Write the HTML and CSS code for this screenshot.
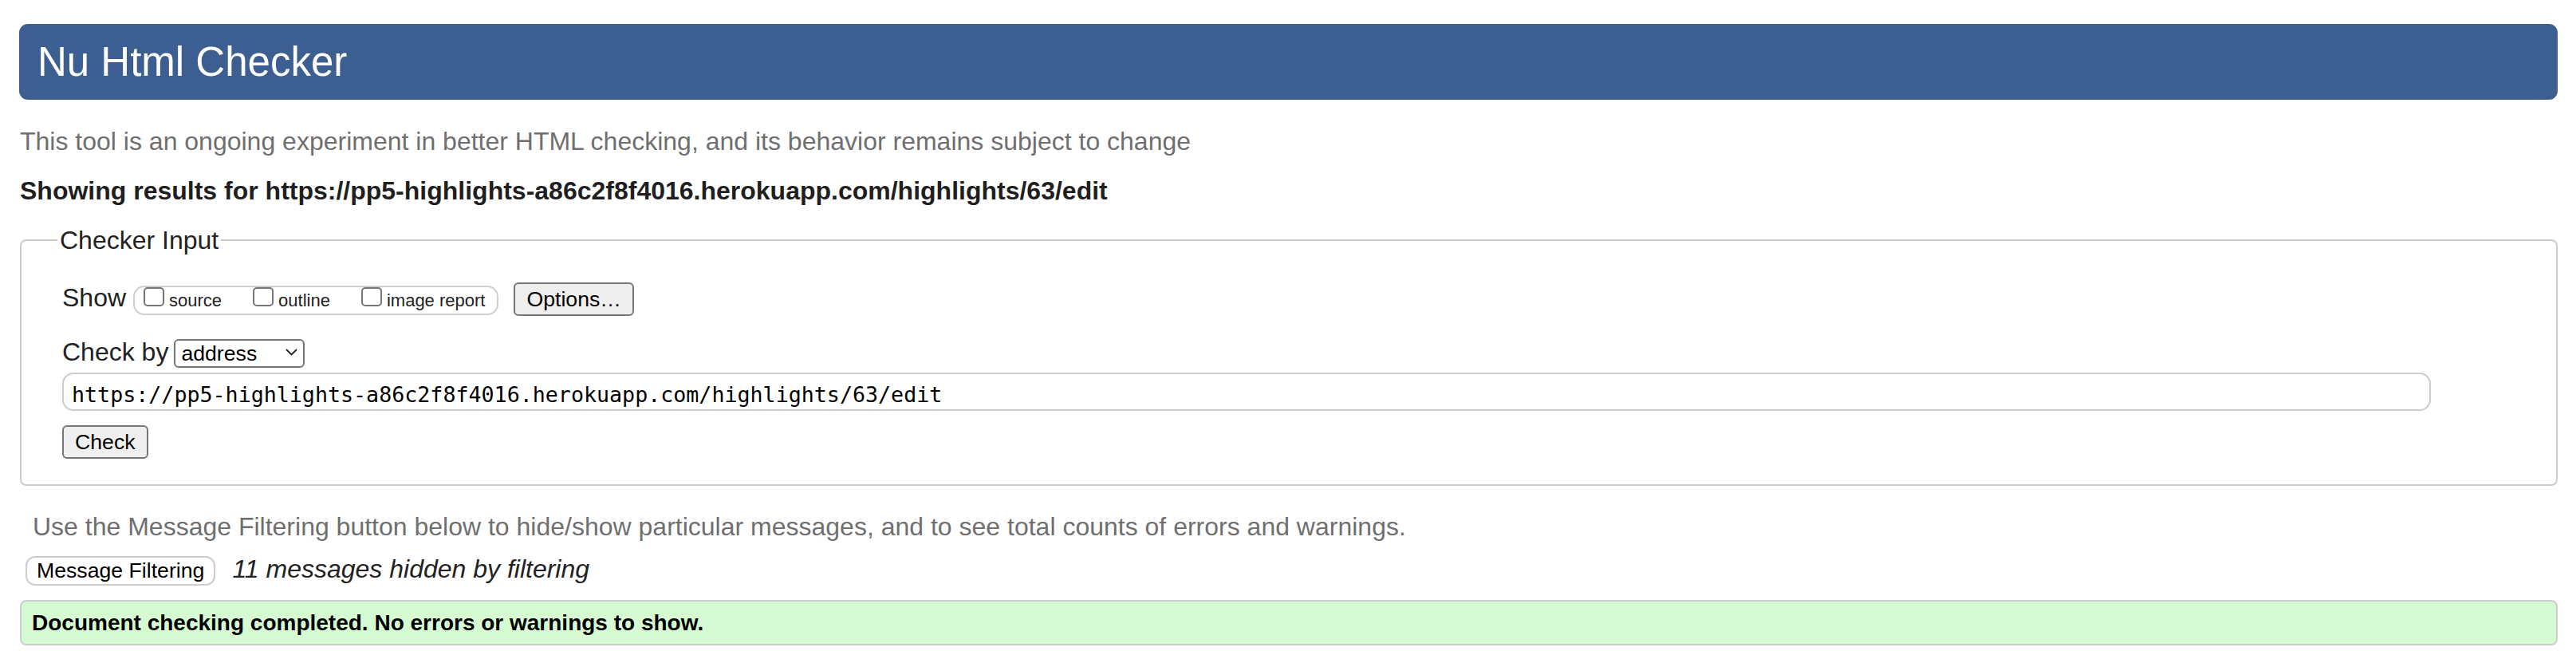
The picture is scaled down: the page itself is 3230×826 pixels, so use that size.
FILE: index.html
```html
<!DOCTYPE html>
<html lang="en">
<head>
<meta charset="utf-8">
<title>Nu Html Checker</title>
<link rel="stylesheet" href="styles.css">
</head>
<body>
<div class="page">
  <h1 class="title">Nu Html Checker</h1>
  <p class="intro">This tool is an ongoing experiment in better HTML checking, and its behavior remains subject to change</p>
  <p class="results-for">Showing results for https://pp5-highlights-a86c2f8f4016.herokuapp.com/highlights/63/edit</p>
  <form class="checker">
    <fieldset class="checker-fieldset">
      <legend class="legend">Checker Input</legend>
      <div class="row row-show">
        <span class="row-label">Show</span>
        <span class="show-group">
          <label class="opt"><input type="checkbox" class="cb">source</label>
          <label class="opt"><input type="checkbox" class="cb">outline</label>
          <label class="opt opt-last"><input type="checkbox" class="cb">image report</label>
        </span>
        <button class="btn btn-options" type="button">Options…</button>
      </div>
      <div class="row row-by">
        <span class="row-label">Check by</span>
        <span class="select-wrap">
          <select class="select"><option>address</option></select>
          <svg class="chev" width="15" height="9" viewBox="0 0 15 9"><path d="M1 1 L7.5 7.5 L14 1" fill="none" stroke="#222" stroke-width="1.8"/></svg>
        </span>
      </div>
      <div class="row-url"><input class="url" type="url" value="https://pp5-highlights-a86c2f8f4016.herokuapp.com/highlights/63/edit"></div>
      <div class="row-submit"><button class="btn" type="button">Check</button></div>
    </fieldset>
  </form>
  <p class="filter-note">Use the Message Filtering button below to hide/show particular messages, and to see total counts of errors and warnings.</p>
  <div class="filter-row">
    <button class="btn-filter" type="button">Message Filtering</button>
    <span class="hidden-count">11 messages hidden by filtering</span>
  </div>
  <div class="success">Document checking completed. No errors or warnings to show.</div>
</div>
</body>
</html>
```

FILE: styles.css
```css
html, body {
  margin: 0;
  padding: 0;
  background: #fff;
}

body {
  font-family: "Liberation Sans", Arial, Helvetica, sans-serif;
  font-size: 32px;
  color: #222;
}

.page {
  padding: 30px 23px 0 25px;
}

.title {
  margin: 0 0 0 -1px;
  height: 95px;
  line-height: 95px;
  padding-left: 23px;
  font-size: 51px;
  font-weight: normal;
  color: #fff;
  background: #3d5e91;
  border-radius: 11px;
}

.intro {
  margin: 32px 0 0;
  line-height: 40px;
  color: #6f6f6f;
}

.results-for {
  margin: 22px 0 0;
  line-height: 40px;
  font-weight: bold;
  color: #1f1f22;
}

.checker {
  margin: 22px 0 0;
}

.checker-fieldset {
  margin: 0;
  min-width: 0;
  border: 2px solid #cccccc;
  border-radius: 8px;
  padding: 32px 0 32px 51px;
}

.legend {
  margin-left: -6px;
  padding: 0 3px;
  line-height: 40px;
  font-size: 32px;
  color: #222;
}

.row {
  display: flex;
  align-items: baseline;
}

.row-label {
  line-height: 40px;
  color: #222;
}

.show-group {
  display: flex;
  align-items: baseline;
  margin-left: 9px;
  border: 2px solid #cfcfcf;
  border-radius: 14px;
  padding: 0 15px 0 3px;
  font-size: 22px;
  line-height: 33px;
  color: #222;
}

.opt {
  display: block;
  margin-right: 31px;
  white-space: nowrap;
}

.opt-last {
  margin-right: 0;
}

.cb {
  appearance: none;
  -webkit-appearance: none;
  box-sizing: border-box;
  width: 26px;
  height: 24px;
  margin: 0 6px 0 8px;
  border: 2px solid #767676;
  border-radius: 5px;
  background: #fff;
  vertical-align: baseline;
}

.btn {
  font-family: "Liberation Sans", Arial, Helvetica, sans-serif;
  font-size: 26.67px;
  line-height: 30px;
  padding: 4px 14px;
  border: 2px solid #767676;
  border-radius: 6px;
  background: #efefef;
  color: #000;
}

.btn-options {
  margin-left: 19px;
}

.row-by {
  margin-top: 25px;
}

.select-wrap {
  position: relative;
  display: inline-block;
  margin-left: 7px;
}

.select {
  appearance: none;
  -webkit-appearance: none;
  box-sizing: border-box;
  width: 164px;
  height: 36px;
  margin: 0;
  padding: 0 0 0 7px;
  border: 2px solid #767676;
  border-radius: 6px;
  background: #fff;
  font-family: "Liberation Sans", Arial, Helvetica, sans-serif;
  font-size: 26.67px;
  color: #000;
}

.chev {
  position: absolute;
  left: 140px;
  top: 14px;
  pointer-events: none;
}

.row-url {
  margin-top: 6px;
}

.url {
  box-sizing: border-box;
  width: 2970px;
  height: 48px;
  margin: 0;
  padding: 6px 10px 0;
  border: 2px solid #cccccc;
  border-radius: 14px;
  background: #fff;
  font-family: "DejaVu Sans Mono", monospace;
  font-size: 26.67px;
  color: #000;
}

.row-submit {
  margin-top: 18px;
  line-height: 0;
}

.filter-note {
  margin: 31px 0 0 16px;
  line-height: 40px;
  color: #6f6f6f;
}

.filter-row {
  display: flex;
  align-items: baseline;
  margin-top: 13px;
}

.btn-filter {
  margin-left: 7px;
  font-family: "Liberation Sans", Arial, Helvetica, sans-serif;
  font-size: 26.67px;
  line-height: 29px;
  padding: 2px 12px;
  border: 2px solid #cccccc;
  border-radius: 12px;
  background: #fff;
  color: #000;
}

.hidden-count {
  margin-left: 21px;
  line-height: 40px;
  font-style: italic;
  color: #222;
}

.success {
  margin-top: 18px;
  border: 2px solid #cccccc;
  border-radius: 8px;
  background: #d6fbd3;
  padding: 10px 13px;
  line-height: 33px;
  font-size: 28px;
  font-weight: bold;
  color: #000;
}
```
